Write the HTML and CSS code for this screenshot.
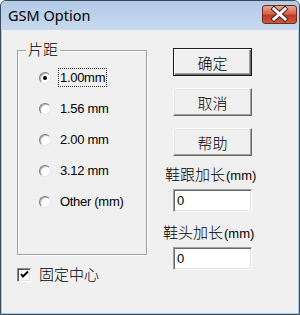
FILE: index.html
```html
<!DOCTYPE html>
<html lang="zh">
<head>
    <meta charset="UTF-8">
    <title>GSM Option</title>
    <link rel="stylesheet" href="styles.css">
</head>
<body>

<div class="window">
    <div class="titlebar">
        <span class="title">GSM Option</span>
        <span class="close">
            <svg width="35" height="19" viewBox="0 0 35 19">
                <path d="M12 4 L23 14 M23 4 L12 14" stroke="#4a2a24" stroke-width="5" stroke-linecap="square"/>
                <path d="M12 4 L23 14 M23 4 L12 14" stroke="#ffffff" stroke-width="3" stroke-linecap="square"/>
            </svg>
        </span>
    </div>

    <div class="client">
        <div class="left">
            <div class="group">
                <div class="group-title">片距</div>
                <div class="options">
                    <div class="option"><span class="radio checked"></span><span class="opt-label focus">1.00mm</span></div>
                    <div class="option"><span class="radio"></span><span class="opt-label">1.56 mm</span></div>
                    <div class="option"><span class="radio"></span><span class="opt-label">2.00 mm</span></div>
                    <div class="option"><span class="radio"></span><span class="opt-label">3.12 mm</span></div>
                    <div class="option"><span class="radio"></span><span class="opt-label">Other (mm)</span></div>
                </div>
            </div>

            <div class="check-row">
                <span class="checkbox">
                    <svg width="11" height="11" viewBox="0 0 11 11">
                        <path d="M2 5 L4 7.5 L9 2.5" stroke="#000" stroke-width="2" fill="none"/>
                    </svg>
                </span>
                <span class="check-label">固定中心</span>
            </div>
        </div>

        <div class="right">
            <div class="btn default">确定</div>
            <div class="btn">取消</div>
            <div class="btn">帮助</div>

            <div class="field-label first">鞋跟加长<span class="small">(mm)</span></div>
            <div class="textbox">0</div>

            <div class="field-label second">鞋头加长<span class="small">(mm)</span></div>
            <div class="textbox">0</div>
        </div>
    </div>
</div>

</body>
</html>
```

FILE: styles.css
```css
body {
    margin: 0;
    font-family: "Liberation Sans", "Noto Sans CJK SC", sans-serif;
    font-size: 13px;
    color: #000;
}

.window {
    width: 300px;
    height: 315px;
    box-sizing: border-box;
    border: 1px solid #3a4a5c;
    border-radius: 6px 6px 0 0;
    background: #a9c8e6;
    display: flex;
    flex-direction: column;
}

.titlebar {
    height: 29px;
    display: flex;
    align-items: flex-start;
    justify-content: space-between;
    background: linear-gradient(#b3cbe7, #c6d9ee);
    border-radius: 5px 5px 0 0;
}

.title {
    font-family: "Noto Sans", sans-serif;
    font-size: 14.5px;
    line-height: 20px;
    margin: 4px 0 0 7px;
}

.close {
    width: 35px;
    height: 19px;
    margin: 4px 2px 0 0;
    box-sizing: border-box;
    border: 1px solid #6e2b20;
    border-radius: 3px;
    background: linear-gradient(#e9a795 0%, #d3664d 45%, #c3391f 55%, #d0583d 100%);
    display: flex;
    align-items: center;
    justify-content: center;
}

.close svg {
    margin: -1px;
}

.client {
    flex: 1;
    margin: 0 1px 1px 1px;
    background: #f0f0f0;
    display: flex;
}

.left {
    margin-left: 15px;
    width: 130px;
}

.group {
    margin-top: 20px;
    height: 205px;
    box-sizing: border-box;
    border: 1px solid #a0a0a0;
    box-shadow: inset 1px 1px #fff, 1px 1px #fff;
}

.group-title {
    width: fit-content;
    margin: -10px 0 0 8px;
    padding: 0 2px;
    background: #f0f0f0;
    font-size: 15px;
    line-height: 17px;
    font-weight: 300;
}

.options {
    padding-top: 4px;
}

.option {
    height: 31px;
    display: flex;
    align-items: center;
    padding-left: 21px;
}

.radio {
    width: 12px;
    height: 12px;
    box-sizing: border-box;
    border-radius: 50%;
    background: #fff;
    border: 1px solid;
    border-color: #7a7a7a #e6e6e6 #e6e6e6 #7a7a7a;
    box-shadow: inset 1px 1px #b4b4b4;
    display: flex;
    align-items: center;
    justify-content: center;
}

.radio.checked::after {
    content: "";
    width: 4px;
    height: 4px;
    border-radius: 50%;
    background: #000;
}

.opt-label {
    margin-left: 7px;
    padding: 0 1px;
    border: 1px dotted transparent;
    line-height: 17px;
    letter-spacing: -0.3px;
}

.opt-label.focus {
    border-color: #333;
}

.check-row {
    margin-top: 11px;
    display: flex;
    align-items: center;
}

.checkbox {
    width: 14px;
    height: 14px;
    box-sizing: border-box;
    background: #fff;
    border: 1px solid;
    border-color: #8a8a8a #fff #fff #8a8a8a;
    box-shadow: inset 1px 1px #555, inset -1px -1px #e3e3e3;
    display: flex;
    align-items: center;
    justify-content: center;
}

.check-label {
    margin-left: 8px;
    font-size: 15px;
    line-height: 17px;
    font-weight: 300;
}

.right {
    margin-left: 16px;
    padding-top: 18px;
}

.btn {
    width: 79px;
    height: 28px;
    margin: 0 0 12px 10px;
    box-sizing: border-box;
    border: 1px solid;
    border-color: #fff #696969 #696969 #fff;
    box-shadow: inset -1px -1px #a0a0a0, inset 1px 1px #e3e3e3;
    display: flex;
    align-items: center;
    justify-content: center;
    font-size: 15px;
    font-weight: 300;
}

.btn.default {
    border-color: #1a1a1a;
    box-shadow: inset 1px 1px #fff, inset -1px -1px #696969, inset -2px -2px #a0a0a0;
}

.field-label {
    font-size: 15px;
    line-height: 18px;
    font-weight: 300;
}

.field-label.first {
    margin: -2px 0 0 2px;
}

.field-label.second {
    margin-top: 12px;
}

.small {
    font-size: 13px;
    font-weight: 400;
    margin-left: 1px;
}

.textbox {
    width: 79px;
    height: 23px;
    margin: 4px 0 0 10px;
    box-sizing: border-box;
    background: #fff;
    border: 1px solid;
    border-color: #a0a0a0 #fff #fff #a0a0a0;
    box-shadow: inset 1px 1px #696969, inset -1px -1px #e3e3e3;
    padding-left: 3px;
    line-height: 21px;
}
```
